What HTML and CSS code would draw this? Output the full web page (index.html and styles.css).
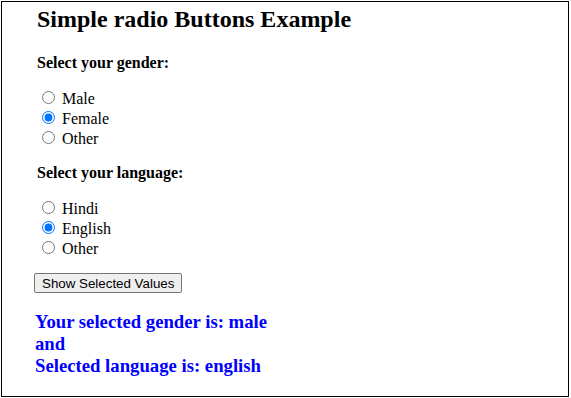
FILE: index.html
```html
<!DOCTYPE html>
<html lang="en">
<head>
    <meta charset="UTF-8">
    <meta name="viewport" content="width=device-width, initial-scale=1.0">
    <title>Simple radio Buttons Example</title>
    <link rel="stylesheet" href="styles.css">
</head>
<body>
    <div class="frame">
        <h2 class="title">Simple radio Buttons Example</h2>

        <p class="question"><b>Select your gender:</b></p>
        <div class="options">
            <input type="radio" name="gender" id="male" value="male"> <label for="male">Male</label><br>
            <input type="radio" name="gender" id="female" value="female" checked> <label for="female">Female</label><br>
            <input type="radio" name="gender" id="gender-other" value="other"> <label for="gender-other">Other</label>
        </div>

        <p class="question"><b>Select your language:</b></p>
        <div class="options">
            <input type="radio" name="language" id="hindi" value="hindi"> <label for="hindi">Hindi</label><br>
            <input type="radio" name="language" id="english" value="english" checked> <label for="english">English</label><br>
            <input type="radio" name="language" id="language-other" value="other"> <label for="language-other">Other</label>
        </div>

        <p class="actions">
            <button class="show-button" onclick="showValues()">Show Selected Values</button>
        </p>

        <div class="result" id="result">
            Your selected gender is: male<br>
            and<br>
            Selected language is: english
        </div>
    </div>

    <script>
        function showValues() {
            const gender = document.querySelector('input[name="gender"]:checked');
            const language = document.querySelector('input[name="language"]:checked');
            const result = document.getElementById('result');

            // Show what is picked right now
            result.innerHTML = "Your selected gender is: " + (gender ? gender.value : "none") +
                "<br>and<br>Selected language is: " + (language ? language.value : "none");
        }
    </script>
</body>
</html>
```

FILE: styles.css
```css
html, body {
    margin: 0;
    background-color: white;
}
body {
    padding: 1px;
    font-family: "Liberation Serif", "Times New Roman", serif;
    font-size: 16px;
    color: black;
}
.frame {
    box-sizing: border-box;
    width: 568px;
    height: 396px;
    border: 1px solid #000;
    padding: 0 0 0 35px;
}
.title {
    font-size: 24px;
    font-weight: bold;
    margin: 4px 0 21px;
}
.question {
    margin: 16px 0;
}
.options {
    margin: 0;
}
.actions {
    margin: 15px 0 18px -3px;
}
.show-button {
    font-family: "Liberation Sans", Arial, sans-serif;
    font-size: 13.33px;
    height: 20px;
    padding: 1px 7px;
    background-color: #efefef;
    border: 1px solid #767676;
    border-radius: 2px;
    color: black;
}
.show-button:hover {
    background-color: #e5e5e5;
}
.result {
    margin-left: -2px;
    color: #0000ff;
    font-size: 18.72px;
    font-weight: bold;
}
```
